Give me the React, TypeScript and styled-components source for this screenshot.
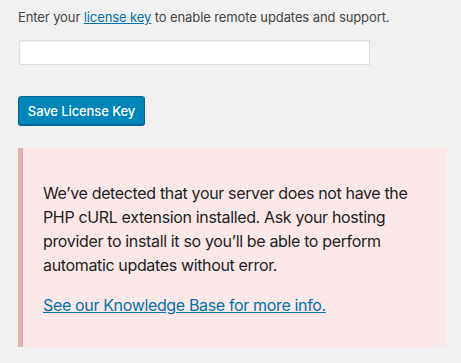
import styled, { createGlobalStyle } from "styled-components";

const GlobalStyle = createGlobalStyle`
  html, body {
    margin: 0;
    padding: 0;
    background: #f1f1f1;
  }
  body {
    font-family: Inter, "Noto Sans", sans-serif;
    color: #23282d;
  }
`;

const Page = styled.div`
  padding: 0 15px 0 18px;
  width: 461px;
  box-sizing: border-box;
`;

const Intro = styled.p`
  margin: 0;
  padding-top: 7px;
  font-size: 13px;
  line-height: 20px;
  letter-spacing: -0.1px;
  color: #444;
`;

const Link = styled.a`
  color: #0073aa;
  text-decoration: underline;
`;

const KeyInput = styled.input`
  display: block;
  box-sizing: border-box;
  width: 351px;
  height: 25px;
  margin: 13px 0 0 1px;
  border: 1px solid #ddd;
  background: #fff;
  box-shadow: inset 0 1px 2px rgba(0, 0, 0, 0.07);
  outline: none;
`;

const SaveButton = styled.button`
  display: block;
  box-sizing: border-box;
  margin-top: 31px;
  height: 29px;
  width: 127px;
  padding: 0;
  white-space: nowrap;
  background: #0085ba;
  border: 1px solid #006799;
  border-radius: 3px;
  box-shadow: 0 1px 0 #006799;
  color: #fff;
  font-family: Inter, "Noto Sans", sans-serif;
  font-size: 13px;
  font-weight: 500;
  letter-spacing: -0.1px;
`;

const Notice = styled.div`
  margin-top: 23px;
  width: 428px;
  box-sizing: border-box;
  background: #fce8e8;
  border-left: 5px solid #e8aeae;
  padding: 33px 20px 30px 20px;
  font-size: 16px;
  line-height: 24px;
  letter-spacing: -0.35px;
  color: #1e1e1e;
`;

const NoticeText = styled.p`
  margin: 0 0 16px;
`;

const NoticeLink = styled(Link)`
  display: inline-block;
`;

export default function App() {
  return (
    <>
      <GlobalStyle />
      <Page>
        <Intro>
          Enter your <Link href="#">license key</Link> to enable remote updates
          and support.
        </Intro>
        <KeyInput type="text" />
        <SaveButton>Save License Key</SaveButton>
        <Notice>
          <NoticeText>
            We’ve detected that your server does not have the PHP cURL
            extension installed. Ask your hosting provider to install it so
            you’ll be able to perform automatic updates without error.
          </NoticeText>
          <NoticeLink href="#">See our Knowledge Base for more info.</NoticeLink>
        </Notice>
      </Page>
    </>
  );
}
